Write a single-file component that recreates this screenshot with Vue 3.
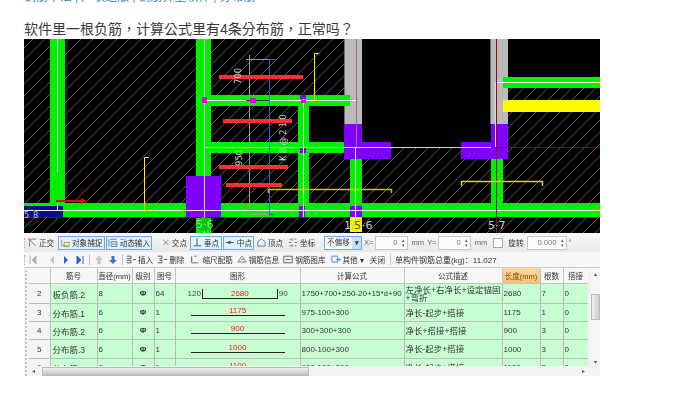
<template>
  <main class="page">
    <div class="crumbs"><span>钢筋平法</span><i>|</i><span>广联达版</span><i>|</i><span>钢筋算量软件</span><i>|</i><span>分布筋</span></div>
    <h1 class="title">软件里一根负筋，计算公式里有4条分布筋，正常吗？</h1>

    <section class="shot">
      <svg class="cad" width="576" height="194" viewBox="24 39 576 194">
        <defs>
          <pattern id="hatch" width="12" height="12" patternUnits="userSpaceOnUse">
            <path d="M-3 15L15 -3M-3 3L3 -3M9 15L15 9" stroke="#5a5a5a" stroke-width="1" />
          </pattern>
        </defs>
        <rect x="24" y="39" width="576" height="194" fill="#000" />
        <rect x="24" y="39" width="576" height="194" fill="url(#hatch)" />

        <!-- black openings -->
        <rect x="309" y="106" width="36" height="36" fill="#000" />
        <rect x="362" y="39" width="129" height="108" fill="#000" />
        <rect x="508" y="39" width="92" height="38" fill="#000" />

        <!-- grey columns -->
        <rect x="344" y="39" width="18" height="85" fill="#bababa" />
        <rect x="491" y="39" width="17" height="85" fill="#bababa" />
        <path d="M344.500 39V124M490.500 39V124" stroke="#6e6e6e" />

        <!-- green beams -->
        <g fill="#00f000">
          <rect x="50" y="39" width="15" height="165" />
          <rect x="196" y="39" width="15" height="165" />
          <rect x="211" y="95" width="139" height="11" />
          <rect x="211" y="142" width="134" height="11" />
          <rect x="298" y="95" width="11" height="110" />
          <rect x="350" y="159" width="12" height="45" />
          <rect x="491" y="159" width="12" height="45" />
          <rect x="24" y="203" width="576" height="14" />
          <rect x="503" y="77" width="97" height="11" />
          <rect x="196" y="217" width="15" height="16" />
        </g>
        <rect x="503" y="100" width="97" height="12" fill="#fafa00" />

        <!-- purple columns -->
        <g fill="#7f00ff">
          <rect x="186" y="176" width="35" height="41" />
          <path d="M344 124h18v18h29v17h-47z" />
          <path d="M491 124h17v35h-47v-17h30z" />
          <rect x="350" y="206" width="12" height="11" />
          <rect x="299" y="206" width="6" height="11" />
          <rect x="300" y="148" width="6" height="5" />
        </g>
        <rect x="24" y="206" width="39" height="11" fill="#0a0a96" />

        <!-- axis lines -->
        <g fill="none" stroke-width="1">
          <path d="M57.500 39V172M57.500 203V210" stroke="#fff" />
          <path d="M204.500 39V233" stroke="#ddd" />
          <path d="M204 100.500H356" stroke="#fff" />
          <path d="M303.500 95V217" stroke="#eee" />
          <path d="M24 210.500H600" stroke="#fff" />
          <path d="M205 147.500H491" stroke="#e6c8c8" />
          <path d="M491 147.500H600" stroke="#8c0000" />
          <path d="M24 217.500H600" stroke="#8c0000" />
          <path d="M355.500 147V217" stroke="#fff" />
          <path d="M356.500 39V147" stroke="#a06a6a" />
          <path d="M496.500 39V233" stroke="#8c0f0f" />
          <path d="M495.500 82V147" stroke="#ddd" />
          <path d="M497 82.500H600" stroke="#fff" />
          <path d="M249.500 55V215M246 59.500H270M250 214.500H270" stroke="#9a9a9a" />
          <path d="M246 100.500H270" stroke="#333" />
          <path d="M269.500 59V214.500M269 59.500H276M269 214.500H275" stroke="#1268d8" />
        </g>

        <!-- rebar bars -->
        <g fill="#f03232">
          <rect x="219" y="75" width="84" height="4" />
          <rect x="223" y="119" width="69" height="4" />
          <rect x="219" y="165" width="69" height="4" />
          <rect x="226" y="183" width="56" height="4" />
        </g>
        <path d="M56 201H82" stroke="#f00000" stroke-width="2" />
        <path d="M81 198L87 201L81 204z" fill="#f00000" />
        <path d="M79.500 188.500L85 194.500M85 188.500L79.500 194.500" stroke="#8c0000" stroke-width="0.800" />

        <!-- yellow ranges -->
        <g fill="none" stroke="#f5f500" stroke-width="1">
          <path d="M319 53.500H314.500V100.500H319" />
          <path d="M149 157.500H144.500V210.500H149" />
          <path d="M268.500 193V189.500H391.500V193" stroke="#c8c800" stroke-width="1.500" />
          <path d="M461.500 186V181.500H542.500V186" stroke="#d8d800" stroke-width="1.500" />
        </g>

        <!-- grip points -->
        <g fill="#e600e6">
          <rect x="202" y="97" width="5" height="6" />
          <rect x="250" y="98" width="6" height="5" />
          <rect x="301" y="100" width="5" height="3" />
        </g>
        <rect x="300" y="95" width="6" height="4" fill="#7f00ff" />

        <!-- dimension labels -->
        <g class="dim" fill="#d0d0d0">
          <text transform="translate(241 84) rotate(-90)">700</text>
          <text class="spread" transform="translate(286 161) rotate(-90)">K8@210</text>
          <text transform="translate(242 166) rotate(-90)">950</text>
        </g>

        <!-- axis tags -->
        <circle cx="30" cy="217" r="8" fill="none" stroke="#0a6e0a" stroke-dasharray="2 1" />
        <rect x="350" y="217" width="12" height="15" fill="#f5f500" />
        <circle cx="496" cy="224" r="7" fill="none" stroke="#0a6e0a" stroke-dasharray="2 1" />
        <circle cx="204" cy="224" r="7" fill="#00c800" />
        <g class="axis" fill="#c8c8c8">
          <text class="small" x="24" y="218">5</text>
          <text class="small" x="33" y="218">8</text>
          <text x="196" y="228" fill="#8cdc8c">5·6</text>
          <text x="344" y="229">1/</text>
          <text x="354" y="229" fill="#555">5</text>
          <text x="362" y="229">·6</text>
          <text x="488" y="229">5·7</text>
        </g>
      </svg>

      <div class="bar bar-one">
        <span class="grip"></span>
        <span
          v-for="t in snapTools"
          :key="t.label"
          class="tool"
          :class="{ on: t.on }"
          :style="{ width: t.w + 'px', marginLeft: (t.ml || 0) + 'px' }"
        >
          <svg width="10" height="11" viewBox="0 0 12 12"><path :d="t.icon" :stroke="t.color" fill="none" /></svg>
          {{ t.label }}
        </span>
        <span class="select">不偏移<b>▾</b></span>
        <span class="lbl dim-lbl">X=</span>
        <span class="spin"><em>0</em><u>▴<br />▾</u></span>
        <span class="lbl mm">mm</span>
        <span class="lbl y">Y=</span>
        <span class="spin"><em>0</em><u>▴<br />▾</u></span>
        <span class="lbl mm">mm</span>
        <span class="check"></span>
        <span class="lbl rot">旋转</span>
        <span class="spin wide"><em>0.000</em><u>▴<br />▾</u></span>
        <span class="lbl">°</span>
      </div>

      <div class="bar bar-two">
        <span class="grip"></span>
        <span class="nav">
          <svg width="10" height="10" viewBox="0 0 10 10"><path d="M2 1v8M8 1L4 5l4 4z" fill="#b4b4b4" stroke="#b4b4b4" /></svg>
          <svg class="nudge" width="10" height="10" viewBox="0 0 10 10"><path d="M7 1L3 5l4 4z" fill="#c0c0c0" /></svg>
          <svg width="10" height="10" viewBox="0 0 10 10"><path d="M3 1l4 4l-4 4z" fill="#2a64c8" /></svg>
          <svg width="10" height="10" viewBox="0 0 10 10"><path d="M8 1v8M2 1l4 4l-4 4z" fill="#2a64c8" stroke="#2a64c8" /></svg>
          <i class="sep"></i>
          <svg width="10" height="10" viewBox="0 0 10 10"><path d="M5 1L9 5H6.500V9h-3V5H1z" fill="#c4c4c4" /></svg>
          <svg width="10" height="10" viewBox="0 0 10 10"><path d="M5 9L9 5H6.500V1h-3V5H1z" fill="#3a70d0" /></svg>
          <i class="sep"></i>
        </span>
        <span
          v-for="t in rowTools"
          :key="t.label"
          class="tool flat"
          :style="{ marginLeft: t.ml + 'px' }"
        >
          <svg width="10" height="11" viewBox="0 0 12 12"><path :d="t.icon" :stroke="t.color" fill="none" /></svg>
          {{ t.label }}
        </span>
        <span class="plain">关闭</span>
        <i class="sep end"></i>
        <span class="total">单构件钢筋总重(kg)：11.027</span>
      </div>

      <div class="sheet">
        <span class="dots"></span>
        <div class="sheet-main">
          <div class="table-box">
            <table>
              <colgroup>
                <col v-for="w in colWidths" :key="w.k" :width="w.w" />
              </colgroup>
              <thead>
                <tr>
                  <th></th><th>筋号</th><th>直径(mm)</th><th>级别</th><th>图号</th><th>图形</th><th>计算公式</th><th>公式描述</th>
                  <th class="sorted">长度(mm)</th><th>根数</th><th>搭接</th>
                </tr>
              </thead>
              <tbody>
                <tr v-for="r in rows" :key="r.no" :class="'row-' + r.no">
                  <td class="no">{{ r.no }}</td>
                  <td class="name">{{ r.name }}</td>
                  <td class="dia">{{ r.dia }}</td>
                  <td class="grade">Φ</td>
                  <td>{{ r.fig }}</td>
                  <td class="shape">
                    <div v-if="r.no === 2" class="hook">
                      <span>120</span><span class="hook-line">2680</span><span>90</span>
                    </div>
                    <div v-else class="straight">{{ r.len }}</div>
                  </td>
                  <td>{{ r.calc }}</td>
                  <td class="desc">{{ r.desc }}</td>
                  <td>{{ r.total }}</td>
                  <td>{{ r.count }}</td>
                  <td>0</td>
                </tr>
              </tbody>
            </table>
          </div>
          <div class="hscroll">
            <span class="arrow">◂</span>
            <span class="thumb-h"></span>
            <span class="arrow end">▸</span>
          </div>
        </div>
        <div class="vscroll">
          <span class="arrow">▴</span>
          <span class="thumb-v"></span>
          <span class="arrow low">▾</span>
        </div>
      </div>
    </section>
  </main>
</template>

<script setup>
const snapTools = [
  { label: '正交', w: 32, icon: 'M1 2h10M3 2v9M3 2l7 8', color: '#b05a50' },
  { label: '对象捕捉', w: 47, icon: 'M2 3v7h8M5 6h6v5H5z', color: '#b88a20', on: true },
  { label: '动态输入', w: 46, icon: 'M1 2v9M3 2h8M4 5h7v6H4zM5 8h5', color: '#4a6a8a', on: true },
  { label: '交点', w: 29, ml: 7, icon: 'M2 2l8 8M10 2l-8 8', color: '#2a64a8' },
  { label: '垂点', w: 32, icon: 'M6 1v9M2 10h9', color: '#1a4a8a', on: true },
  { label: '中点', w: 31, icon: 'M1 6h10M4 5h3v2H4z', color: '#1a4a8a', on: true },
  { label: '顶点', w: 30, icon: 'M6 1l5 4v6H1V5z', color: '#2a64a8' },
  { label: '坐标', w: 32, icon: 'M5 1v3M5 8v3M1 6h3M8 6h3M2 2h2M8 2h2M2 10h2M8 10h2', color: '#3a5a8a' }
]

const rowTools = [
  { label: '插入', ml: 0, icon: 'M1 2h5v3H1M1 7h5v3H1M8 6h4', color: '#444' },
  { label: '删除', ml: 4, icon: 'M1 2h5v3H3M1 10h5V7H3M8 6h4', color: '#444' },
  { label: '缩尺配筋', ml: 6, icon: 'M2 2v8h8M5 2h3M2 5v2', color: '#555' },
  { label: '钢筋信息', ml: 4, icon: 'M1 9l5-7l5 7zM5 6h3', color: '#8a5a4a' },
  { label: '钢筋图库', ml: 4, icon: 'M1 2h10v8H1zM3 6h6', color: '#3a4a6a' },
  { label: '其他 ▾', ml: 5, icon: 'M1 2h7v7H1zM6 6h5M9 4l2 2l-2 2', color: '#3a80c0' }
]

const colWidths = [21, 47, 35, 22, 21, 125, 104, 98, 38, 23, 25].map((w, k) => ({ w, k }))

const rows = [
  { no: 2, name: '板负筋.2', dia: 8, fig: 64, calc: '1750+700+250-20+15*d+90', desc: '左净长+右净长+设定锚固+弯折', total: 2680, count: 7 },
  { no: 3, name: '分布筋.1', dia: 6, fig: 1, len: 1175, calc: '975-100+300', desc: '净长-起步+搭接', total: 1175, count: 1 },
  { no: 4, name: '分布筋.2', dia: 6, fig: 1, len: 900, calc: '300+300+300', desc: '净长+搭接+搭接', total: 900, count: 3 },
  { no: 5, name: '分布筋.3', dia: 6, fig: 1, len: 1000, calc: '800-100+300', desc: '净长-起步+搭接', total: 1000, count: 3 },
  { no: 6, name: '分布筋.4', dia: 6, fig: 1, len: 1100, calc: '900-100+300', desc: '净长-起步+搭接', total: 1100, count: 3 }
]
</script>

<style>
html,
body {
  background: #fff;
  overflow: hidden;
}
</style>

<style scoped>
.page {
  width: 674px;
  height: 400px;
  padding-left: 24px;
  box-sizing: border-box;
  overflow: hidden;
  font-family: "Liberation Sans", "Noto Sans CJK SC", sans-serif;
}

.crumbs {
  height: 3px;
  display: flex;
  align-items: flex-end;
  gap: 3px;
  overflow: hidden;
  font-size: 12px;
  line-height: 11px;
  color: #3d80c8;
}

.crumbs i {
  font-style: normal;
  color: #888;
}

.title {
  margin: 17px 0 0;
  height: 19px;
  font-family: "Liberation Sans", "Noto Sans CJK TC", sans-serif;
  font-size: 14px;
  line-height: 19px;
  font-weight: 400;
  color: #3a3a3a;
}

.shot {
  width: 576px;
  height: 337px;
  overflow: hidden;
  font-size: 7.600px;
  color: #333;
  background: #f2f2f2;
}

.cad {
  display: block;
}

.dim text {
  font: 8.500px "DejaVu Sans", sans-serif;
}

.dim text.spread {
  letter-spacing: 2.200px;
}

.axis text {
  font: 11px "DejaVu Sans", sans-serif;
}

.axis text.small {
  font-size: 8px;
}

.bar {
  display: flex;
  align-items: center;
  filter: blur(0.250px);
}

.bar-one {
  height: 19px;
  background: linear-gradient(#f8f8f8, #e8e8e8);
}

.bar-two {
  height: 16px;
  background: #f6f6f6;
  border-bottom: 1px solid #ccc;
  box-sizing: border-box;
}

.grip {
  width: 1px;
  height: 10px;
  border-left: 1px dotted #aaa;
  box-sizing: border-box;
}

.tool {
  box-sizing: border-box;
  display: inline-flex;
  align-items: center;
  gap: 2px;
  height: 14px;
  padding: 0 1px;
  margin-right: 1px;
  border: 1px solid transparent;
  white-space: nowrap;
}

.tool.on {
  border-color: #6aa8e8;
  background: #e4f0fc;
}

.tool.flat {
  padding: 0;
  margin-right: 0;
  border: 0;
}

.plain {
  margin-left: 6px;
  white-space: nowrap;
}

.select {
  position: relative;
  box-sizing: border-box;
  width: 38px;
  height: 14px;
  margin-left: 5px;
  padding-left: 2px;
  line-height: 12px;
  white-space: nowrap;
  background: #fff;
  border: 1px solid #6aa8e8;
}

.select b {
  position: absolute;
  top: 0;
  right: 0;
  width: 9px;
  height: 12px;
  text-align: center;
  font-size: 7px;
  background: #c8e0f8;
}

.lbl {
  margin: 0 1px 0 2px;
  color: #666;
  white-space: nowrap;
}

.lbl.mm {
  margin: 0 2px 0 4px;
}

.lbl.y {
  margin-left: 1px;
}

.lbl.rot {
  margin: 0 3px 0 5px;
  color: #333;
}

.spin {
  box-sizing: border-box;
  display: flex;
  align-items: center;
  width: 33px;
  height: 14px;
  background: #fbfbfb;
  border: 1px solid #c8c8c8;
}

.spin.wide {
  width: 40px;
}

.spin em {
  flex: 1;
  font-style: normal;
  text-align: right;
  padding-right: 2px;
  color: #777;
}

.spin u {
  width: 7px;
  font-size: 5px;
  line-height: 5px;
  text-decoration: none;
  text-align: center;
  color: #555;
}

.check {
  width: 8px;
  height: 8px;
  margin-left: 4px;
  background: #fff;
  border: 1px solid #aaa;
}

.nav {
  display: inline-flex;
  align-items: center;
  gap: 4px;
  margin: 0 3px 0 3px;
}

.nav .nudge {
  margin-left: 5px;
}

.sep {
  width: 1px;
  height: 11px;
  background: #c4c4c4;
}

.sep.end {
  margin: 0 4px 0 5px;
}

.total {
  white-space: nowrap;
  font-size: 8px;
}

.sheet {
  display: flex;
  height: 108px;
  background: #f2f2f2;
  filter: blur(0.250px);
}

.dots {
  width: 3px;
  margin: 2px 1px 0 1px;
  border-left: 2px dotted #c8c8c8;
  box-sizing: border-box;
}

.sheet-main {
  width: 562px;
  display: flex;
  flex-direction: column;
}

.table-box {
  width: 559px;
  height: 98px;
  overflow: hidden;
  background: #c8ffd2;
}

table {
  width: 559px;
  table-layout: fixed;
  border-collapse: collapse;
  font-size: 8px;
  color: #333;
}

th {
  height: 15px;
  padding: 0;
  font-size: 7.500px;
  font-weight: 400;
  white-space: nowrap;
  background: #f6f6f6;
  border-right: 1px solid #c4c4c4;
  border-bottom: 1px solid #c4c4c4;
}

th.sorted {
  background: linear-gradient(#fbd9a0, #f5c070);
  color: #7a4a10;
}

td {
  height: 17px;
  padding: 0 1px;
  border-right: 1px solid #bcbcbc;
  border-bottom: 1px solid #bcbcbc;
  overflow: hidden;
  white-space: nowrap;
}

.row-2 td {
  height: 19px;
}

.row-5 td {
  height: 18px;
}

td.no {
  text-align: center;
  background: #f4f4f4;
  padding: 0;
}

td.name {
  font-size: 8.500px;
  padding-left: 2px;
}

td.dia {
  border-left: 1px solid #555;
}

td.grade {
  text-align: center;
  font-weight: 700;
}

td.desc {
  font-size: 8.500px;
  line-height: 8px;
  white-space: normal;
}

.shape {
  padding: 0;
}

.hook {
  display: flex;
  justify-content: flex-start;
  padding-left: 12px;
  gap: 1px;
  color: #444;
}

.hook-line {
  box-sizing: border-box;
  width: 76px;
  height: 10px;
  line-height: 9px;
  text-align: center;
  color: #e82020;
  border: 1.500px solid #222;
  border-top: 0;
}

.straight {
  width: 94px;
  margin: 0 auto 2px;
  text-align: center;
  line-height: 8px;
  color: #e82020;
  border-bottom: 1.500px solid #222;
}

.hscroll {
  position: relative;
  height: 10px;
  background: #f4f4f4;
  display: flex;
  align-items: center;
}

.arrow {
  font-size: 6px;
  line-height: 8px;
  color: #555;
  width: 9px;
  text-align: center;
}

.arrow.end {
  position: absolute;
  right: 0;
}

.thumb-h {
  width: 267px;
  height: 9px;
  margin-left: 4px;
  background: linear-gradient(#eee, #c4c4c4);
  border: 1px solid #bbb;
  box-sizing: border-box;
}

.vscroll {
  display: flex;
  flex-direction: column;
  align-items: center;
  width: 9px;
  height: 98px;
  margin-left: 3px;
  padding-top: 2px;
  box-sizing: border-box;
  background: #f6f6f6;
}

.thumb-v {
  width: 9px;
  height: 26px;
  margin-top: 16px;
  background: linear-gradient(90deg, #eee, #ccc);
  border: 1px solid #bbb;
  box-sizing: border-box;
}

.arrow.low {
  margin-top: auto;
}
</style>
